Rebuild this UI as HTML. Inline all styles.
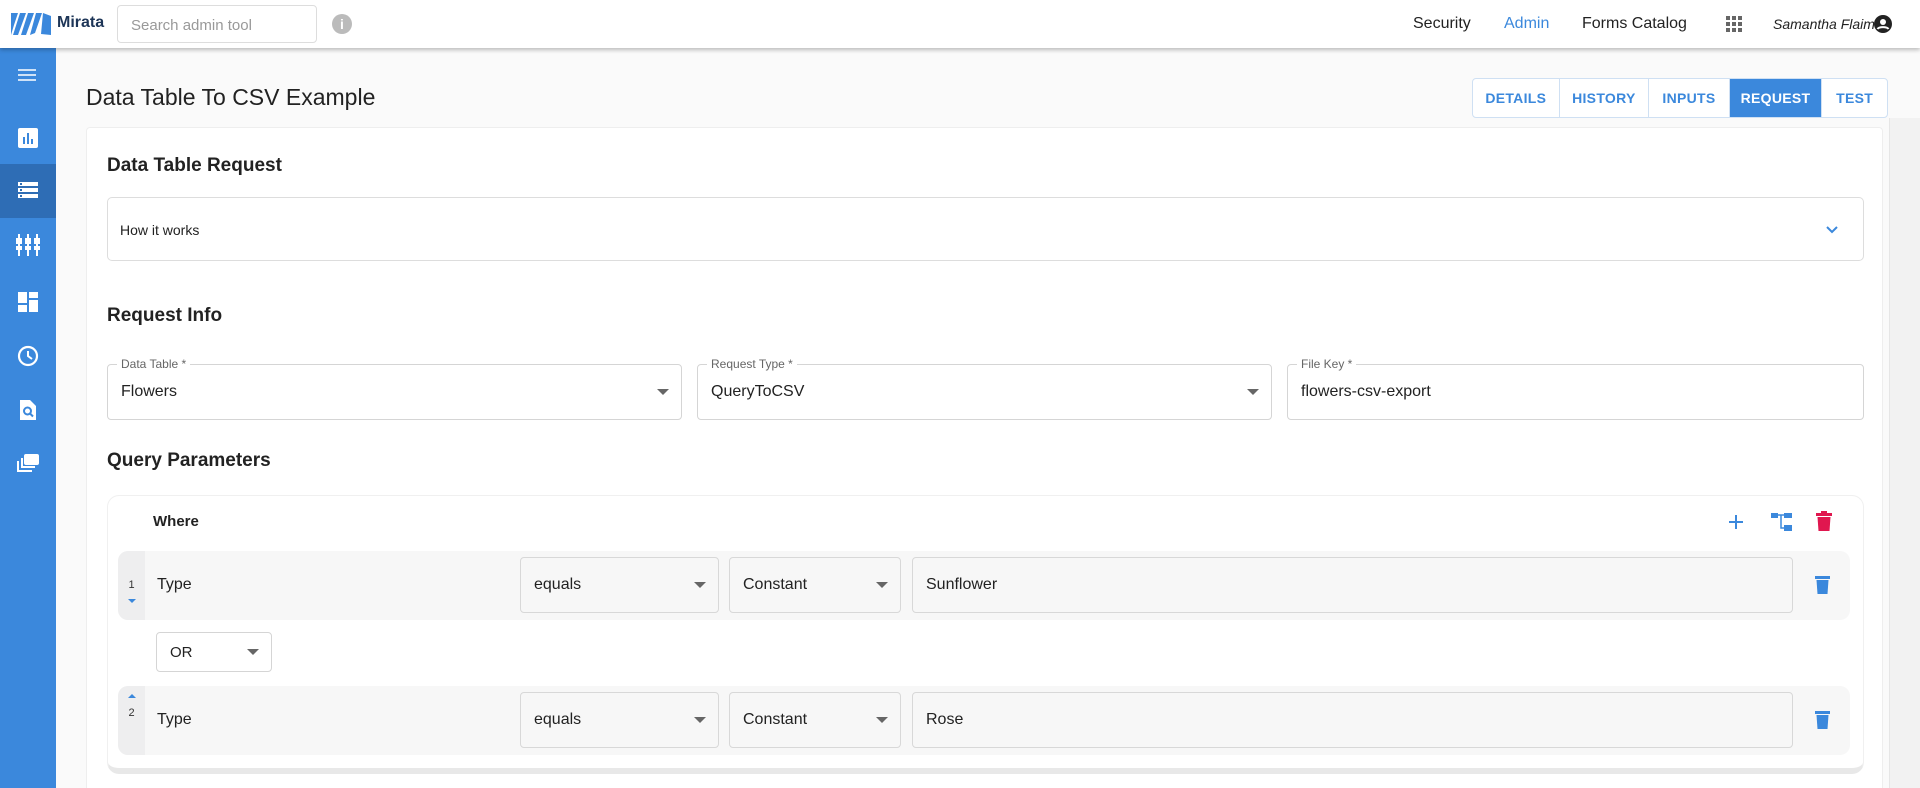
<!DOCTYPE html>
<html><head><meta charset="utf-8"><style>
*{box-sizing:border-box;margin:0;padding:0}
html{width:1920px;height:788px;overflow:hidden}
body{width:1920px;height:788px;overflow:hidden;background:#fafafa;font-family:"Liberation Sans",Roboto,sans-serif;color:#222;position:relative}
.abs{position:absolute}
.hdr{left:0;top:0;width:1920px;height:48px;background:#fff;box-shadow:0 2px 4px rgba(0,0,0,.25);z-index:5}
.side{left:0;top:48px;width:56px;height:740px;background:#3b88dc}
.side svg{position:absolute;left:16px}
.tabs{left:1472px;top:78px;width:416px;height:40px;border:1px solid #cfe0f3;border-radius:4px;display:flex;background:#fff;overflow:hidden}
.tabs div{display:flex;align-items:center;justify-content:center;font-size:14px;font-weight:bold;color:#3b88dc;border-right:1px solid #cfe0f3;letter-spacing:.3px}
.card{left:86px;top:127px;width:1797px;height:661px;background:#fff;border:1px solid #eee;border-bottom:none;border-radius:4px 4px 0 0}
h2{position:absolute;font-size:19px;font-weight:bold;color:#222}
.box{position:absolute;border:1px solid #ddd;border-radius:5px;background:#fff}
.fld{position:absolute;border:1px solid #d5d5d5;border-radius:4px;background:#fff;font-size:16px;padding-left:13px;display:flex;align-items:center}
.lbl{position:absolute;top:-8px;left:9px;background:#fff;padding:0 4px;font-size:12px;color:#666;line-height:14px}
.caret{position:absolute;right:12px;top:50%;margin-top:-3px;width:0;height:0;border-left:6px solid transparent;border-right:6px solid transparent;border-top:6px solid #666}
.row{position:absolute;left:118px;width:1732px;height:69px;background:#f7f7f7;border-radius:10px}
.num{position:absolute;left:0;top:0;width:27px;height:69px;background:#eeeeef;border-radius:10px 0 0 10px;font-size:11px;color:#333;text-align:center}
.sel{position:absolute;border:1px solid #d8d8d8;border-radius:4px;background:#f7f7f7;font-size:16px;padding-left:13px;display:flex;align-items:center;height:56px;top:6px}
</style></head><body>
<div class="abs hdr">
 <svg class="abs" style="left:10px;top:11px" width="48" height="26" viewBox="0 0 48 26"><path d="M1 2h7L4 14 1 24z" fill="#3b88dc"/><path d="M10 2h6L8 24H3z" fill="#3b88dc"/><path d="M18 2h6l-8 22h-5z" fill="#3b88dc"/><path d="M26 2h6L25 22l-5 2z" fill="#3b88dc"/><path d="M33 2l8 3v19l-10-1z" fill="#3b88dc"/></svg>
 <div class="abs" style="left:57px;top:14px;font-size:16px;font-weight:bold;color:#1d3557">Mirata</div>
 <div class="abs" style="left:117px;top:5px;width:200px;height:38px;border:1px solid #ddd;border-radius:4px;font-size:15px;color:#999;padding:11px 0 0 13px">Search admin tool</div>
 <div class="abs" style="left:332px;top:14px;width:20px;height:20px;border-radius:50%;background:#bbb;color:#fff;font-size:14px;font-weight:bold;text-align:center;line-height:20px">i</div>
 <div class="abs" style="left:1413px;top:15px;font-size:16px">Security</div>
 <div class="abs" style="left:1504px;top:15px;font-size:16px;color:#3b88dc">Admin</div>
 <div class="abs" style="left:1582px;top:15px;font-size:16px">Forms Catalog</div>
 <svg class="abs" style="left:1726px;top:16px" width="17" height="17" viewBox="0 0 17 17" fill="#666"><rect x="0" y="0" width="4" height="4"/><rect x="6" y="0" width="4" height="4"/><rect x="12" y="0" width="4" height="4"/><rect x="0" y="6" width="4" height="4"/><rect x="6" y="6" width="4" height="4"/><rect x="12" y="6" width="4" height="4"/><rect x="0" y="12" width="4" height="4"/><rect x="6" y="12" width="4" height="4"/><rect x="12" y="12" width="4" height="4"/></svg>
 <div class="abs" style="left:1773px;top:16px;font-size:14px;font-style:italic">Samantha Flaim</div>
 <svg class="abs" style="left:1874px;top:15px" width="18" height="18" viewBox="0 0 18 18"><circle cx="9" cy="9" r="9" fill="#222"/><circle cx="9" cy="7" r="3" fill="#fff"/><path d="M3.5 14c1.5-2.5 9.5-2.5 11 0" stroke="#fff" stroke-width="2" fill="none"/></svg>
</div>
<div class="abs side">
 <svg style="top:20px" width="24" height="16" viewBox="0 0 24 16" fill="#cfe2f7"><rect x="2" y="1" width="18" height="2"/><rect x="2" y="6" width="18" height="2"/><rect x="2" y="11" width="18" height="2"/></svg>
 <svg style="top:78px" width="24" height="24" viewBox="0 0 24 24"><rect x="2" y="2" width="20" height="20" rx="2" fill="#fff"/><rect x="7" y="11" width="2" height="7" fill="#3b88dc"/><rect x="11" y="7" width="2" height="11" fill="#3b88dc"/><rect x="15" y="13" width="2" height="5" fill="#3b88dc"/></svg>
 <div class="abs" style="left:0;top:116px;width:56px;height:54px;background:#2e6db5"></div>
 <svg style="top:132px" width="24" height="22" viewBox="0 0 24 22" fill="#fff"><rect x="2" y="2" width="20" height="4"/><rect x="2" y="8" width="20" height="4"/><rect x="2" y="14" width="20" height="4"/><rect x="4" y="3" width="2" height="2" fill="#2e6db5"/><rect x="4" y="9" width="2" height="2" fill="#2e6db5"/><rect x="4" y="15" width="2" height="2" fill="#2e6db5"/></svg>
 <svg style="top:186px" width="24" height="24" viewBox="0 0 24 24" fill="#fff"><rect x="0" y="4" width="6" height="6"/><rect x="9" y="4" width="6" height="6"/><rect x="18" y="4" width="6" height="6"/><rect x="0" y="12" width="6" height="4"/><rect x="9" y="12" width="6" height="4"/><rect x="18" y="12" width="6" height="4"/><rect x="2" y="0" width="2" height="22"/><rect x="11" y="0" width="2" height="22"/><rect x="20" y="0" width="2" height="22"/></svg>
 <svg style="top:242px" width="24" height="24" viewBox="0 0 24 24" fill="#fff"><rect x="2" y="2" width="9" height="11"/><rect x="13" y="2" width="9" height="6"/><rect x="2" y="15" width="9" height="7"/><rect x="13" y="10" width="9" height="12"/></svg>
 <svg style="top:296px" width="24" height="24" viewBox="0 0 24 24"><circle cx="12" cy="12" r="9" stroke="#fff" stroke-width="2.2" fill="none"/><path d="M12 7v5l4 3" stroke="#fff" stroke-width="2" fill="none"/></svg>
 <svg style="top:350px" width="24" height="24" viewBox="0 0 24 24"><path d="M4 2h10l6 6v14H4z" fill="#fff"/><circle cx="11.5" cy="13" r="3.5" stroke="#3b88dc" stroke-width="2" fill="none"/><path d="M14 15.5l3 3" stroke="#3b88dc" stroke-width="2"/></svg>
 <svg style="top:404px" width="24" height="24" viewBox="0 0 24 24" fill="none" stroke="#fff" stroke-width="2"><rect x="9" y="3" width="13" height="9" rx="1" fill="#fff"/><path d="M6 6v9h13"/><path d="M2 9v10h14"/></svg>
</div>
<div class="abs" style="left:86px;top:84px;font-size:23px;color:#222">Data Table To CSV Example</div>
<div class="abs tabs">
 <div style="width:87px">DETAILS</div><div style="width:90px">HISTORY</div><div style="width:81px">INPUTS</div><div style="width:93px;background:#3b88dc;color:#fff">REQUEST</div><div style="width:65px;border-right:none">TEST</div>
</div>
<div class="abs" style="left:1889px;top:118px;width:31px;height:670px;background:#f2f2f2;border-left:1px solid #e6e6e6"></div>
<div class="abs card"></div>
<h2 style="left:107px;top:155px">Data Table Request</h2>
<div class="box" style="left:107px;top:197px;width:1757px;height:64px"><div class="abs" style="left:12px;top:24px;font-size:14px">How it works</div>
<svg class="abs" style="left:1716px;top:24px" width="16" height="16" viewBox="0 0 16 16"><path d="M3 5l5 5 5-5" stroke="#3b88dc" stroke-width="2" fill="none"/></svg></div>
<h2 style="left:107px;top:305px">Request Info</h2>
<div class="fld" style="left:107px;top:364px;width:575px;height:56px"><span class="lbl">Data Table *</span>Flowers<span class="caret"></span></div>
<div class="fld" style="left:697px;top:364px;width:575px;height:56px"><span class="lbl">Request Type *</span>QueryToCSV<span class="caret"></span></div>
<div class="fld" style="left:1287px;top:364px;width:577px;height:56px"><span class="lbl">File Key *</span>flowers-csv-export</div>
<h2 style="left:107px;top:450px">Query Parameters</h2>
<div class="abs" style="left:107px;top:495px;width:1757px;height:279px;background:#fff;border:1px solid #f0f0f0;border-radius:12px;border-bottom:6px solid #e8e8e8"></div>
<div class="abs" style="left:153px;top:513px;font-size:15px;font-weight:bold">Where</div>
<svg class="abs" style="left:1728px;top:514px" width="16" height="16" viewBox="0 0 16 16"><path d="M8 1v14M1 8h14" stroke="#3b88dc" stroke-width="2"/></svg>
<svg class="abs" style="left:1771px;top:512px" width="22" height="20" viewBox="0 0 22 20" fill="#3b88dc"><rect x="0" y="1" width="7" height="5"/><rect x="13" y="1" width="8" height="5"/><rect x="13" y="13" width="8" height="6"/><path d="M7 3h6M10 3v13h3" stroke="#3b88dc" stroke-width="1.5" fill="none"/></svg>
<svg class="abs" style="left:1816px;top:511px" width="16" height="20" viewBox="0 0 16 20" fill="#e0174f"><rect x="0" y="2" width="16" height="3"/><rect x="5" y="0" width="6" height="3"/><path d="M1.5 6h13l-1 14h-11z"/></svg>
<div class="row" style="top:551px"><div class="num"><div style="margin-top:28px">1</div><div style="margin:8px auto 0;width:0;height:0;border-left:4px solid transparent;border-right:4px solid transparent;border-top:4px solid #3b88dc"></div></div>
 <div class="abs" style="left:39px;top:25px;font-size:16px">Type</div>
 <div class="sel" style="left:402px;width:199px">equals<span class="caret"></span></div>
 <div class="sel" style="left:611px;width:172px">Constant<span class="caret"></span></div>
 <div class="sel" style="left:794px;width:881px">Sunflower</div>
 <svg class="abs" style="left:1697px;top:24px" width="15" height="19" viewBox="0 0 15 19" fill="#3b88dc"><rect x="0" y="1" width="15" height="3"/><path d="M1.5 5h12l-1 14h-10z"/></svg>
</div>
<div class="fld" style="left:156px;top:632px;width:116px;height:40px;font-size:15px">OR<span class="caret"></span></div>
<div class="row" style="top:686px"><div class="num"><div style="margin:8px auto 0;width:0;height:0;border-left:4px solid transparent;border-right:4px solid transparent;border-bottom:4px solid #3b88dc"></div><div style="margin-top:9px">2</div></div>
 <div class="abs" style="left:39px;top:25px;font-size:16px">Type</div>
 <div class="sel" style="left:402px;width:199px">equals<span class="caret"></span></div>
 <div class="sel" style="left:611px;width:172px">Constant<span class="caret"></span></div>
 <div class="sel" style="left:794px;width:881px">Rose</div>
 <svg class="abs" style="left:1697px;top:24px" width="15" height="19" viewBox="0 0 15 19" fill="#3b88dc"><rect x="0" y="1" width="15" height="3"/><path d="M1.5 5h12l-1 14h-10z"/></svg>
</div>
</body></html>
